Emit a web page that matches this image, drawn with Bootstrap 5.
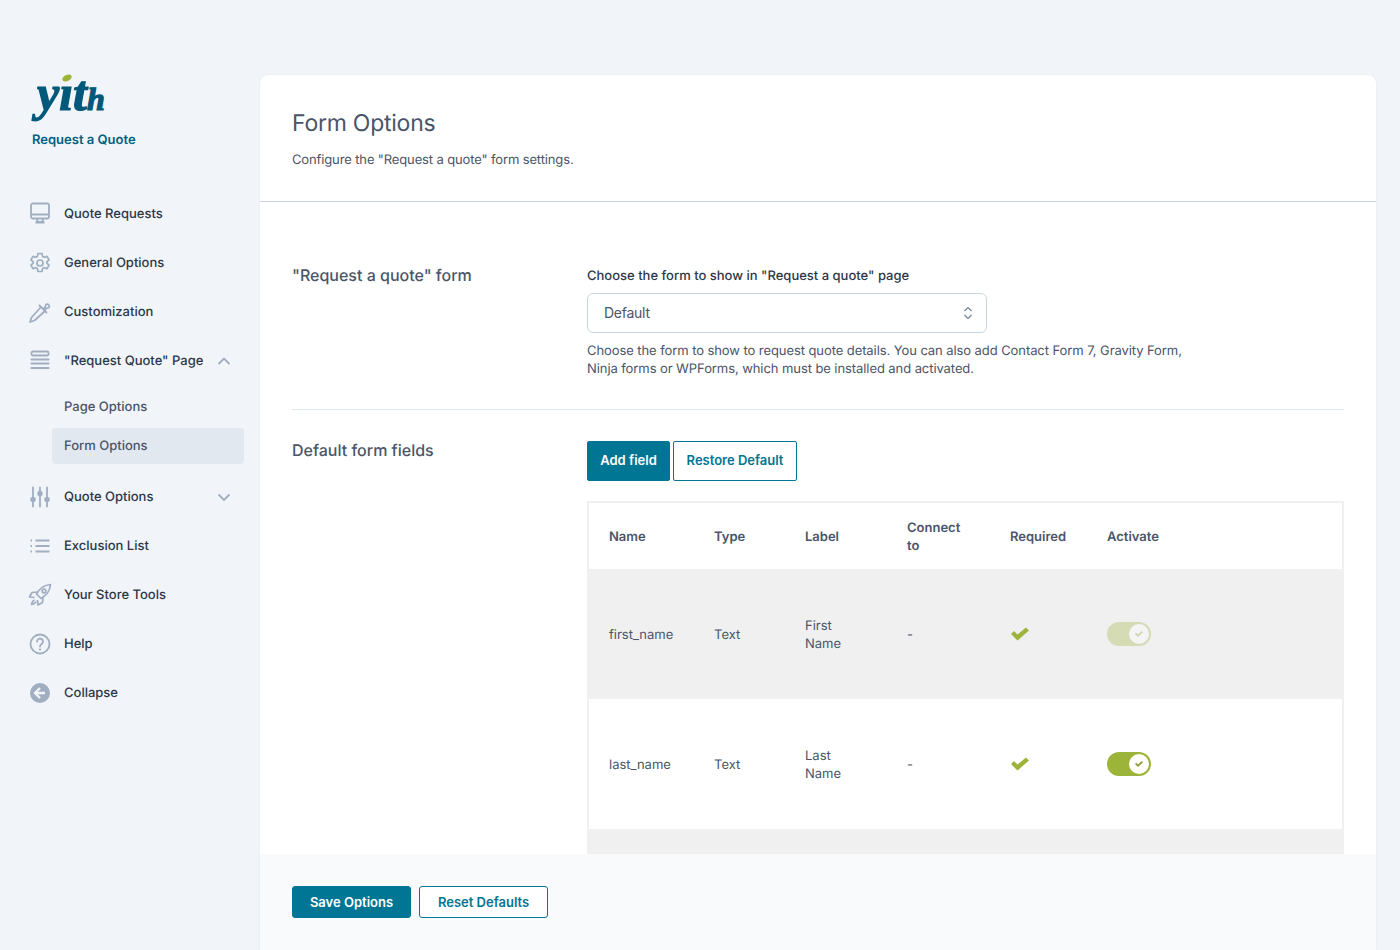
<!DOCTYPE html>
<html lang="en">
<head>
    <meta charset="UTF-8" />
    <meta name="viewport" content="width=device-width, initial-scale=1" />
    <title>Form Options - Request a Quote</title>
    <link href="https://cdn.jsdelivr.net/npm/bootstrap@5.3.0/dist/css/bootstrap.min.css" rel="stylesheet" />
    <style>
        html, body { height: 950px; overflow: hidden; }
        body { background-color: #f1f4f9; color: #4a5568; font-family: Inter, "Liberation Sans", sans-serif; font-size: 13px; text-rendering: geometricPrecision; }

        /* Sidebar */
        .page-wrap { height: 950px; padding: 75px 24px 0 0; }
        .side-col { width: 260px; flex: none; }
        .brand-box { padding-left: 32px; height: 114px; }
        .brand-logo { position: relative; height: 47px; width: 76px; }
        .brand-word { position: absolute; left: 5px; top: -12px; font: italic 700 50px/60px "Liberation Serif", serif; letter-spacing: 0; color: #00587a; -webkit-text-stroke: 1.2px #00587a; }
        .brand-word small { font-size: 32px; letter-spacing: 0; }
        .brand-dot { position: absolute; left: 30px; top: 0; width: 10px; height: 6px; border-radius: 50%; background: #9db43b; transform: rotate(-25deg); }
        .brand-name { color: #00607f; font-weight: 600; line-height: 18px; margin-top: 9px; }
        .side-menu { padding: 0 16px 0 28px; }
        .side-link { height: 49px; padding-top: 2px; color: #2d3748; font-weight: 500; text-decoration: none; }
        .side-link svg.menu-icon { width: 24px; height: 24px; margin-right: 12px; margin-top: -2px; flex: none; color: #a0aec0; }
        .side-link .caret { margin-left: auto; margin-right: 13px; margin-top: -2px; width: 14px; height: 14px; color: #a0aec0; }
        .side-sub { height: 36px; margin: 0 0 3px 24px; padding: 2px 0 0 12px; color: #4a5568; font-weight: 500; border-radius: 4px; text-decoration: none; }
        .side-sub.current { background: #e2e8f0; }
        .side-subs { padding: 4px 0 5px; }

        /* Main panel */
        .main-panel { flex: 1; background: #fff; border-radius: 8px 8px 0 0; box-shadow: 0 0 2px rgba(0, 0, 0, .08); overflow: hidden; }
        .panel-head { height: 127px; padding: 32px 32px 0; border-bottom: 1px solid #cbd5e0; flex: none; }
        .panel-head h1 { font-size: 23px; font-weight: 400; line-height: 32px; color: #4a5568; margin: 0 0 12px; letter-spacing: -.25px; }
        .panel-head p { margin: 0; line-height: 18px; letter-spacing: -.13px; }
        .panel-body { flex: 1; min-height: 0; overflow: hidden; padding: 0 32px; }
        .panel-foot { height: 96px; flex: none; background: #f8fafc; padding: 32px; }

        .opt-row { border-bottom: 1px solid #e2e8f0; padding: 65px 0 31px; }
        .opt-row.last-row { border: 0; padding-top: 31px; }
        .opt-title { width: 295px; flex: none; font-size: 16px; font-weight: 500; line-height: 20px; color: #4a5568; margin-top: -2px; }
        .last-row .opt-title { margin-top: -1px; }
        .field-label { color: #2d3748; font-weight: 500; line-height: 18px; margin-bottom: 8px; }
        .quote-select { width: 400px; height: 40px; font-size: 14px; line-height: 38px; letter-spacing: -.25px; color: #4a5568; border-color: #cbd5e0; border-radius: 6px; padding: 0 16px; background-size: 10px 14px; background-position: right 13px center; background-image: url("data:image/svg+xml,%3Csvg xmlns='http://www.w3.org/2000/svg' viewBox='0 0 10 14'%3E%3Cpath d='M1.5 5 5 1.5 8.5 5M1.5 9 5 12.5 8.5 9' fill='none' stroke='%23718096' stroke-width='1.2'/%3E%3C/svg%3E"); }
        .field-help { line-height: 18px; margin: 9px 0 0; width: 610px; letter-spacing: -.08px; }

        .btn-teal, .btn-teal-line { font-size: 13px; font-weight: 600; border-radius: 2px; border: 1px solid #007694; }
        .btn-teal { background: #007694; color: #fff; }
        .btn-teal-line { background: #fff; color: #007694; }
        .btn-add { width: 83px; height: 40px; padding: 0; }
        .btn-restore { width: 124px; height: 40px; padding: 0; margin-left: 3px; }
        .btn-save { width: 119px; height: 32px; padding: 2px 0 0; border-radius: 3px; }
        .btn-reset { width: 129px; height: 32px; padding: 2px 0 0; border-radius: 3px; margin-left: 8px; }

        .fields-table { width: 757px; table-layout: fixed; margin: 20px 0 0; border: 2px solid #f0f0f0; border-bottom: 0; color: #4a5568; }
        .fields-table th, .fields-table td { padding: 2px 20px 0; vertical-align: middle; line-height: 18px; border: 0; background: transparent; box-shadow: none; color: inherit; }
        .fields-table th { height: 67px; font-weight: 600; }
        .fields-table td { height: 130px; }
        .fields-table tr.shade-row { background: #f0f0f0; }
        .fields-table tr.stub-row td { height: 40px; }
        .tick-icon { width: 20px; height: 16px; display: block; color: #9db43b; margin-top: -3px; }

        .toggle-pill { display: block; width: 44px; height: 24px; border-radius: 12px; background: #9db43b; position: relative; margin-top: -3px; }
        .toggle-pill .knob { position: absolute; right: 2px; top: 2px; width: 20px; height: 20px; border-radius: 50%; background: #fff; }
        .toggle-pill svg { position: absolute; left: 5px; top: 5px; width: 10px; height: 10px; color: #8a9e35; }
        .toggle-pill.faded { opacity: .32; }
    </style>
</head>
<body>
<div class="page-wrap d-flex">
    <!-- Sidebar -->
    <div class="side-col">
        <div class="brand-box">
            <div class="brand-logo">
                <span class="brand-word">yıt<small>h</small></span>
                <span class="brand-dot"></span>
            </div>
            <div class="brand-name">Request a Quote</div>
        </div>
        <nav class="side-menu">
            <a class="side-link d-flex align-items-center" href="#">
                <svg class="menu-icon" viewBox="0 0 24 24" fill="none" stroke="currentColor" stroke-width="1.8"><rect x="3" y="1.500" width="18" height="15" rx="2"/><path d="M3 12.500h18M9.500 16.500l-.7 3.500h6.400l-.7-3.500M7.500 20.500h9"/></svg>
                Quote Requests
            </a>
            <a class="side-link d-flex align-items-center" href="#">
                <svg class="menu-icon" viewBox="0 0 24 24" fill="none" stroke="currentColor" stroke-width="1.7" stroke-linejoin="round"><path d="M10 2.500h4l.6 2.900 1.600.9 2.800-.9 2 3.400-2.200 2v1.400l2.200 2-2 3.400-2.800-.9-1.600.9-.6 2.900h-4l-.6-2.900-1.600-.9-2.800.9-2-3.400 2.200-2v-1.400l-2.200-2 2-3.400 2.800.9 1.600-.9z"/><circle cx="12" cy="12" r="3"/></svg>
                General Options
            </a>
            <a class="side-link d-flex align-items-center" href="#">
                <svg class="menu-icon" viewBox="0 0 24 24" fill="none" stroke="currentColor" stroke-width="1.800" stroke-linejoin="round" stroke-linecap="round"><path d="M13 7 3.500 17.500 2 22l4.500-1.500L17 11"/><path d="M11.500 5.500l7 7M15 9l2-1.500 1-3a2.200 2.200 0 0 1 3 3l-3 1L16.500 11"/></svg>
                Customization
            </a>
            <a class="side-link d-flex align-items-center" href="#">
                <svg class="menu-icon" viewBox="0 0 24 24" fill="none" stroke="currentColor" stroke-width="1.800" stroke-linecap="round"><rect x="3.500" y="2.500" width="17" height="4" rx="1.500"/><path d="M3.500 10.500h17M3.500 14.500h17M3.500 19h17" stroke-width="2.200"/></svg>
                "Request Quote" Page
                <svg class="caret" viewBox="0 0 14 14" fill="none" stroke="currentColor" stroke-width="1.800"><path d="M1.500 10 7 4.500 12.500 10"/></svg>
            </a>
            <div class="side-subs">
                <a class="side-sub d-flex align-items-center" href="#">Page Options</a>
                <a class="side-sub current d-flex align-items-center" href="#">Form Options</a>
            </div>
            <a class="side-link d-flex align-items-center" href="#">
                <svg class="menu-icon" viewBox="0 0 24 24" fill="none" stroke="currentColor" stroke-width="1.800" stroke-linecap="round"><path d="M5 2.500v19M12 2.500v19M19 2.500v19"/><circle cx="5" cy="14.500" r="1.800" fill="currentColor"/><circle cx="12" cy="8.500" r="1.800" fill="currentColor"/><circle cx="19" cy="14.500" r="1.800" fill="currentColor"/></svg>
                Quote Options
                <svg class="caret" viewBox="0 0 14 14" fill="none" stroke="currentColor" stroke-width="1.800"><path d="M1.500 4.500 7 10l5.500-5.500"/></svg>
            </a>
            <a class="side-link d-flex align-items-center" href="#">
                <svg class="menu-icon" viewBox="0 0 24 24" fill="none" stroke="currentColor" stroke-width="1.800"><path d="M7.500 6.500h14M7.500 12h14M7.500 17.500h14"/><path d="M2.500 6.500h1.500M2.500 12h1.500M2.500 17.500h1.500"/></svg>
                Exclusion List
            </a>
            <a class="side-link d-flex align-items-center" href="#">
                <svg class="menu-icon" viewBox="0 0 24 24" fill="none" stroke="currentColor" stroke-width="1.700" stroke-linejoin="round"><path d="M22.500 1.500c-6 .5-10.500 3.500-14 9.500l4.500 4.500c6-3.500 9-8 9.500-14z"/><circle cx="16" cy="8" r="1.800"/><path d="M9.500 9 4 9.500 1.500 14l5 .5M15 14.500l-.5 5L10 22l-.5-5M6.500 17c-1.500.5-2.500 2-3 4.500 2.500-.5 4-1.500 4.500-3"/></svg>
                Your Store Tools
            </a>
            <a class="side-link d-flex align-items-center" href="#">
                <svg class="menu-icon" viewBox="0 0 24 24" fill="none" stroke="currentColor" stroke-width="1.800"><circle cx="12" cy="12" r="9.500"/><path d="M9 9.500a3 3 0 1 1 4.700 2.500c-1.100.7-1.700 1.300-1.700 2.500" stroke-linecap="round"/><circle cx="12" cy="17.500" r="1.100" fill="currentColor" stroke="none"/></svg>
                Help
            </a>
            <a class="side-link d-flex align-items-center" href="#">
                <svg class="menu-icon" viewBox="0 0 24 24"><circle cx="12" cy="12" r="10" fill="currentColor"/><path d="M12 7l-5 5 5 5M7.500 12h9.500" fill="none" stroke="#f1f4f9" stroke-width="2.400"/></svg>
                Collapse
            </a>
        </nav>
    </div>

    <!-- Main panel -->
    <main class="main-panel d-flex flex-column">
        <header class="panel-head">
            <h1>Form Options</h1>
            <p>Configure the "Request a quote" form settings.</p>
        </header>
        <div class="panel-body">
            <div class="opt-row d-flex">
                <div class="opt-title">"Request a quote" form</div>
                <div>
                    <div class="field-label">Choose the form to show in "Request a quote" page</div>
                    <select class="form-select quote-select"><option>Default</option></select>
                    <p class="field-help">Choose the form to show to request quote details. You can also add Contact Form 7, Gravity Form, Ninja forms or WPForms, which must be installed and activated.</p>
                </div>
            </div>
            <div class="opt-row last-row d-flex">
                <div class="opt-title">Default form fields</div>
                <div>
                    <div class="d-flex">
                        <button type="button" class="btn btn-teal btn-add">Add field</button>
                        <button type="button" class="btn btn-teal-line btn-restore">Restore Default</button>
                    </div>
                    <table class="table fields-table">
                        <colgroup>
                            <col style="width:106px" /><col style="width:91px" /><col style="width:102px" /><col style="width:103px" /><col style="width:97px" /><col />
                        </colgroup>
                        <thead>
                            <tr><th>Name</th><th>Type</th><th>Label</th><th>Connect to</th><th>Required</th><th>Activate</th></tr>
                        </thead>
                        <tbody>
                            <tr class="shade-row">
                                <td>first_name</td><td>Text</td><td>First Name</td><td>-</td>
                                <td><svg class="tick-icon" viewBox="0 0 20 16"><path d="M1 8l3-3 3.500 3.500L16 1.500l3 3L7.500 14.500z" fill="currentColor"/></svg></td>
                                <td><span class="toggle-pill faded"><span class="knob"><svg viewBox="0 0 10 10"><path d="M1 5l1.200-1.200L4 5.500 7.800 2 9 3.200 4 8z" fill="currentColor"/></svg></span></span></td>
                            </tr>
                            <tr>
                                <td>last_name</td><td>Text</td><td>Last Name</td><td>-</td>
                                <td><svg class="tick-icon" viewBox="0 0 20 16"><path d="M1 8l3-3 3.500 3.500L16 1.500l3 3L7.500 14.500z" fill="currentColor"/></svg></td>
                                <td><span class="toggle-pill"><span class="knob"><svg viewBox="0 0 10 10"><path d="M1 5l1.200-1.200L4 5.500 7.800 2 9 3.200 4 8z" fill="currentColor"/></svg></span></span></td>
                            </tr>
                            <tr class="shade-row stub-row"><td colspan="6"></td></tr>
                        </tbody>
                    </table>
                </div>
            </div>
        </div>
        <footer class="panel-foot d-flex">
            <button type="button" class="btn btn-teal btn-save">Save Options</button>
            <button type="button" class="btn btn-teal-line btn-reset">Reset Defaults</button>
        </footer>
    </main>
</div>

<script src="https://cdn.jsdelivr.net/npm/bootstrap@5.3.0/dist/js/bootstrap.bundle.min.js"></script>
</body>
</html>
